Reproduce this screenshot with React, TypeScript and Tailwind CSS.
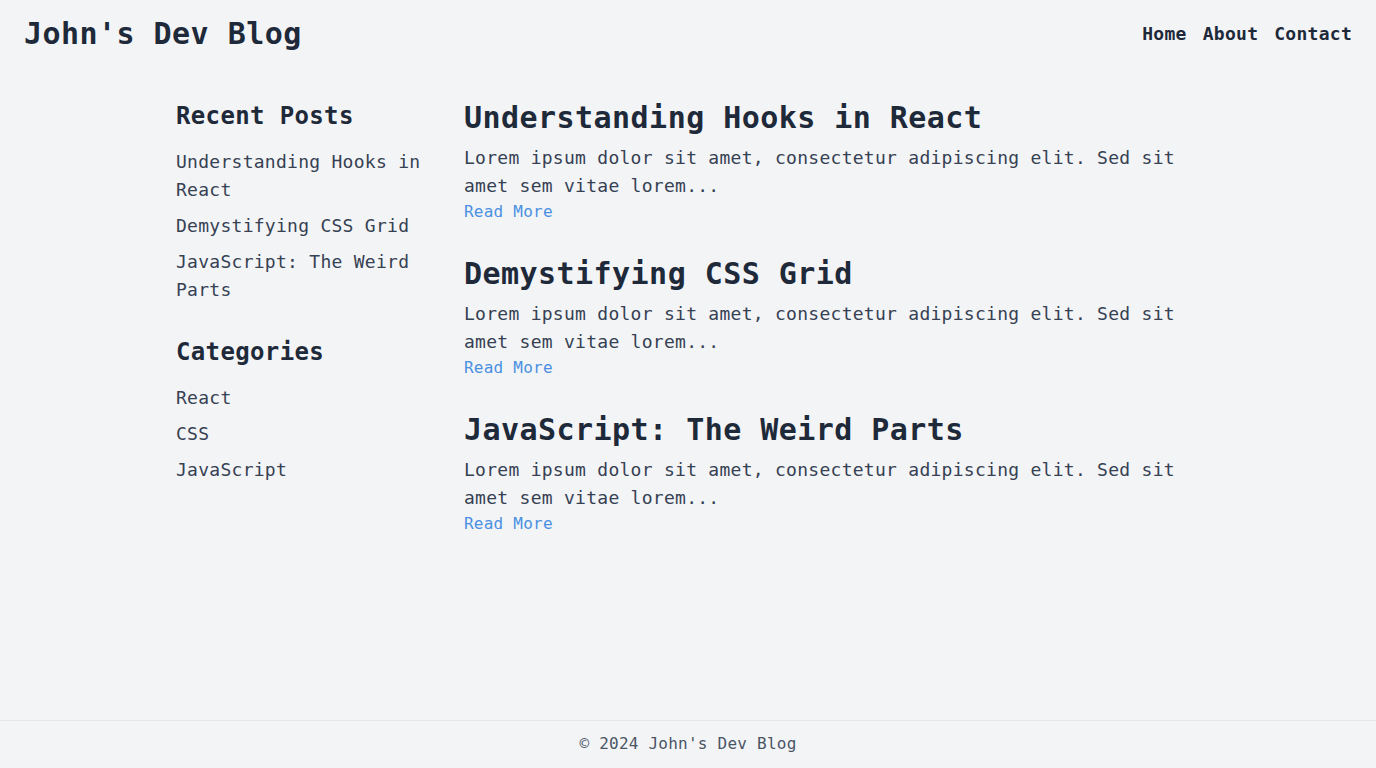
import React from "react";

const posts = [
  { title: "Understanding Hooks in React" },
  { title: "Demystifying CSS Grid" },
  { title: "JavaScript: The Weird Parts" },
];

const excerpt =
  "Lorem ipsum dolor sit amet, consectetur adipiscing elit. Sed sit amet sem vitae lorem...";

const categories = ["React", "CSS", "JavaScript"];

export default function App() {
  return (
    <div className="min-h-screen flex flex-col bg-gray-100 text-gray-800 font-['DejaVu_Sans_Mono',monospace]">
      <header className="flex items-center justify-between px-6 py-4">
        <h1 className="text-3xl font-bold tracking-[0.015em] text-gray-800">John's Dev Blog</h1>
        <nav className="flex space-x-4 text-lg font-semibold tracking-[0.015em]">
          <a href="#">Home</a>
          <a href="#">About</a>
          <a href="#">Contact</a>
        </nav>
      </header>

      <main className="flex-1 w-full max-w-5xl mx-auto pt-8 flex gap-8">
        <aside className="w-64 shrink-0">
          <section className="mb-8">
            <h2 className="text-2xl font-bold tracking-[0.015em] mb-4">Recent Posts</h2>
            <ul className="space-y-2 text-lg tracking-[0.015em] text-gray-700">
              {posts.map((p) => (
                <li key={p.title}>
                  <a href="#">{p.title}</a>
                </li>
              ))}
            </ul>
          </section>
          <section>
            <h2 className="text-2xl font-bold tracking-[0.015em] mb-4">Categories</h2>
            <ul className="space-y-2 text-lg tracking-[0.015em] text-gray-700">
              {categories.map((c) => (
                <li key={c}>
                  <a href="#">{c}</a>
                </li>
              ))}
            </ul>
          </section>
        </aside>

        <div className="flex-1 space-y-8">
          {posts.map((p) => (
            <article key={p.title}>
              <h2 className="text-3xl font-bold tracking-[0.015em] mb-2">{p.title}</h2>
              <p className="text-lg tracking-[0.015em] text-gray-700">{excerpt}</p>
              <a href="#" className="text-base tracking-[0.015em] text-[#4a90e2]">
                Read More
              </a>
            </article>
          ))}
        </div>
      </main>

      <footer className="border-t border-gray-200 pt-[11px] pb-3 text-center text-base tracking-[0.015em] text-gray-600">
        © 2024 John's Dev Blog
      </footer>
    </div>
  );
}
